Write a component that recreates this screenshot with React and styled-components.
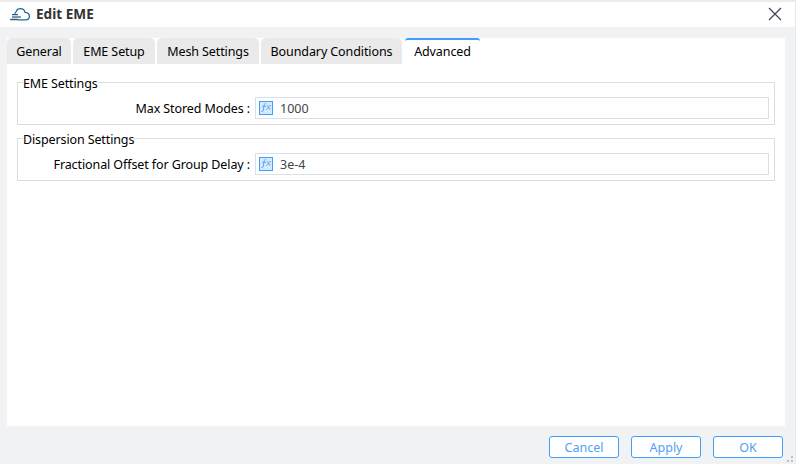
import React from "react";
import styled, { createGlobalStyle } from "styled-components";

const GlobalStyle = createGlobalStyle`
  * { box-sizing: border-box; }
  body { margin: 0; background: #f1f2f4; }
`;

const Dialog = styled.div`
  width: 796px;
  height: 464px;
  display: flex;
  flex-direction: column;
  overflow: hidden;
  position: relative;
  background: #f1f2f4;
  border-top: 2px solid #ebebeb;
  border-right: 1px solid #e9eaed;
  font-family: "Noto Sans", "Open Sans", sans-serif;
  font-size: 12.5px;
  color: #000;
`;

const TitleBar = styled.header`
  height: 25px;
  flex: none;
  display: flex;
  align-items: center;
  padding: 0 13px 0 9px;
  background: #fff;
`;

const Title = styled.h1`
  flex: 1;
  margin: 0 0 2px 5px;
  font-size: 13.6px;
  line-height: 23px;
  font-weight: 700;
  color: #333;
`;

const CloseButton = styled.button`
  display: flex;
  padding: 0;
  border: 0;
  margin-top: -2px;
  background: none;
`;

const Content = styled.main`
  width: 778px;
  height: 388px;
  flex: none;
  margin: 11px 0 0 7px;
  background: #fff;
`;

const TabList = styled.nav`
  display: flex;
  gap: 2px;
  height: 26px;
`;

const Tab = styled.button`
  width: ${(p) => p.$width}px;
  padding: 0;
  border: 0;
  border-top: ${(p) => (p.$active ? "2px solid #409eff" : "0")};
  border-radius: ${(p) => (p.$active ? "3px 3px 0 0" : "5px 5px 0 0")};
  margin-left: ${(p) => (p.$active ? "1px" : "0")};
  background: ${(p) => (p.$active ? "#fff" : "#eaeaea")};
  font: inherit;
  line-height: ${(p) => (p.$active ? 24 : 27)}px;
  letter-spacing: -0.1px;
  color: inherit;
  white-space: nowrap;
`;

const Groups = styled.div`
  display: flex;
  flex-direction: column;
  gap: 13px;
  padding: 18px 10px 0;
`;

const Group = styled.section`
  height: 43px;
  border: 1px solid #dcdcdf;
`;

const Legend = styled.h2`
  width: max-content;
  height: 14px;
  margin: -7px 0 0 5px;
  background: #fff;
  font-size: inherit;
  font-weight: 400;
  line-height: 15px;
  letter-spacing: -0.12px;
`;

const Field = styled.label`
  display: flex;
  align-items: center;
  height: 22px;
  margin: 7px 5px 0 0;
`;

const FieldLabel = styled.span`
  width: 232px;
  margin-right: 5px;
  text-align: right;
  white-space: nowrap;
  letter-spacing: -0.1px;
`;

const InputBox = styled.span`
  flex: 1;
  height: 22px;
  display: flex;
  align-items: center;
  padding-left: 3px;
  border: 1px solid #dcdfe6;
  background: #fff;
`;

const Input = styled.input`
  flex: 1;
  min-width: 0;
  height: 20px;
  margin-left: 7px;
  padding: 1px 0 0;
  border: 0;
  outline: 0;
  background: none;
  font: inherit;
  color: #444548;
`;

const Footer = styled.footer`
  display: flex;
  justify-content: flex-end;
  gap: 12px;
  padding: 10px 12px 0 0;
`;

const Button = styled.button`
  width: 70px;
  height: 22px;
  padding: 0;
  border: 1px solid #409eff;
  border-radius: 3px;
  background: #fff;
  font: inherit;
  line-height: 21px;
  color: #559df5;
`;

const Grip = styled.svg`
  position: absolute;
  right: 2px;
  bottom: 2px;
`;

const CloudIcon = () => (
  <svg width="22" height="16" viewBox="0 0 22 16" fill="none">
    <path
      d="M5.500 6.800C6.500 6 6.800 5.600 7.200 4.400 7.800 2.600 9.600 1.600 11.500 1.600c2.400 0 4 1.400 4.500 3.700 2.700.2 4.400 1.800 4.400 3.900 0 2.300-1.600 3.600-3.900 3.600H9"
      stroke="#1b6b98"
      strokeWidth="1.3"
    />
    <path d="M3 7.600h6M1.200 12.500h8" stroke="#255f83" strokeWidth="1.300" />
    <path d="M3 10h9" stroke="#8396aa" strokeWidth="2" />
  </svg>
);

const CloseIcon = () => (
  <svg width="14" height="14" viewBox="0 0 14 14">
    <path d="M1 1l12 12M13 1L1 13" stroke="#3c4354" strokeWidth="1.2" />
  </svg>
);

const FxIcon = () => (
  <svg width="14" height="14" viewBox="0 0 14 14" fill="none">
    <rect x=".5" y=".5" width="13" height="13" fill="#d5eaff" stroke="#409eff" />
    <path
      d="M7.300 2.800c-1.300-.7-1.900.2-2.200 1.700L4.300 9c-.3 1.600-.9 2.200-2 1.600M3.300 5.300h3.700M7.600 4.800c1.200-.5 1.600.2 1.900 1.400.4 1.800.9 2.400 2 1.700M12 4.700c-1.300-.2-2.200.8-2.700 1.800S8 8.700 7 8.300"
      stroke="#5ba4f3"
      strokeWidth="1"
    />
  </svg>
);

const tabs = [
  { name: "General", width: 64 },
  { name: "EME Setup", width: 82 },
  { name: "Mesh Settings", width: 102 },
  { name: "Boundary Conditions", width: 141 },
  { name: "Advanced", width: 75, active: true },
];

const groups = [
  { title: "EME Settings", label: "Max Stored Modes :", value: "1000" },
  { title: "Dispersion Settings", label: "Fractional Offset for Group Delay :", value: "3e-4" },
];

export default function App() {
  return (
    <>
      <GlobalStyle />
      <Dialog>
        <TitleBar>
          <CloudIcon />
          <Title>Edit EME</Title>
          <CloseButton aria-label="Close"><CloseIcon /></CloseButton>
        </TitleBar>
        <Content>
          <TabList>
            {tabs.map((t) => (
              <Tab key={t.name} $width={t.width} $active={t.active}>{t.name}</Tab>
            ))}
          </TabList>
          <Groups>
            {groups.map((g) => (
              <Group key={g.title}>
                <Legend>{g.title}</Legend>
                <Field>
                  <FieldLabel>{g.label}</FieldLabel>
                  <InputBox>
                    <FxIcon />
                    <Input defaultValue={g.value} />
                  </InputBox>
                </Field>
              </Group>
            ))}
          </Groups>
        </Content>
        <Footer>
          <Button>Cancel</Button>
          <Button>Apply</Button>
          <Button>OK</Button>
        </Footer>
        <Grip width="6" height="6" fill="#bfbfc2">
          <path d="M4 0h2v2H4zM0 4h2v2H0zM4 4h2v2H4z" />
        </Grip>
      </Dialog>
    </>
  );
}
